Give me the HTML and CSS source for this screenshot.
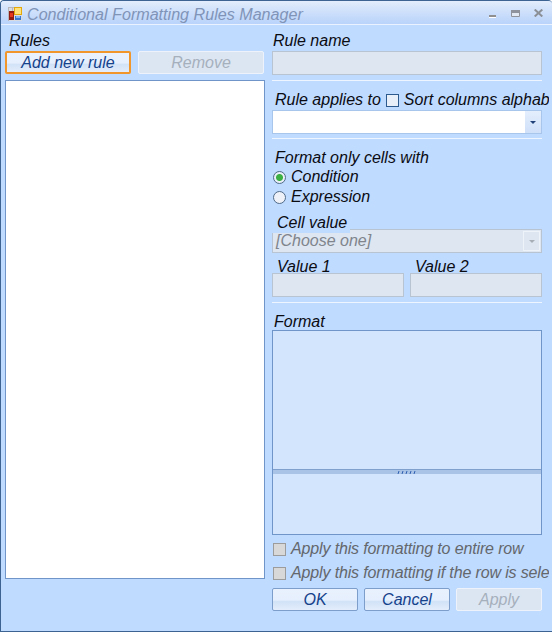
FILE: index.html
```html
<!DOCTYPE html>
<html>
	<head>
		<title>Conditional Formatting Rules Manager</title>
		<link rel="stylesheet" href="styles.css">
	</head>
	<body>
		<div class="window">
			<div class="titlebar">
				<svg class="app-icon" width="14" height="14" viewBox="0 0 14 14">
					<rect x="0" y="0" width="14" height="14" fill="#d9dbe2"/>
					<path d="M0 .5h14M0 4.5h6M.5 0v14M4.5 0v4" stroke="#b9b6ba" fill="none"/>
					<rect x="6" y="0" width="8" height="8" fill="#e3a90c"/>
					<rect x="7" y="1" width="6" height="6" fill="#ffe27a"/>
					<rect x="1" y="4" width="5" height="9" fill="#8f1d14"/>
					<rect x="2" y="6" width="3" height="4" fill="#e6371f"/>
					<rect x="7" y="9" width="6" height="4" fill="#3a78d0"/>
					<rect x="8" y="9" width="4" height="2" fill="#86b6f0"/>
				</svg>
				<span class="title">Conditional Formatting Rules Manager</span>
				<div class="window-buttons">
					<svg class="btn-min" width="7" height="4" viewBox="0 0 7 4"><rect width="7" height="2" y="0" fill="#8f8f8f"/><rect width="7" height="1" y="2" fill="#fff"/></svg>
					<svg class="btn-max" width="9" height="7" viewBox="0 0 9 7"><rect width="9" height="7" fill="#e3e9f2"/><rect width="9" height="3" fill="#8f939b"/><path d="M.5.5h8v6h-8z" fill="none" stroke="#8f939b"/></svg>
					<svg width="9" height="8" viewBox="0 0 9 8"><path d="M.7.5l7.6 7M8.3.5l-7.6 7" stroke="#8b8f96" stroke-width="2" fill="none"/></svg>
				</div>
			</div>
			<div class="content">
				<div class="left">
					<div class="label">Rules</div>
					<div class="rule-buttons">
						<button class="btn btn-focus">Add new rule</button>
						<button class="btn btn-disabled">Remove</button>
					</div>
					<div class="rule-list"></div>
				</div>
				<div class="right">
					<div class="label">Rule name</div>
					<div class="input input-disabled"></div>
					<div class="sep sep-name"></div>

					<div class="applies-row">
						<span class="label">Rule applies to</span>
						<span class="checkbox"></span>
						<span class="label">Sort columns alphabetically</span>
					</div>
					<div class="combo">
						<span class="combo-text"></span>
						<span class="combo-arrow"><i class="arrow"></i></span>
					</div>
					<div class="sep sep-applies"></div>

					<div class="label format-only">Format only cells with</div>
					<div class="radio-row">
						<span class="radio radio-on"></span>
						<span class="label">Condition</span>
					</div>
					<div class="radio-row">
						<span class="radio"></span>
						<span class="label">Expression</span>
					</div>

					<div class="label cell-value">Cell value</div>
					<div class="combo combo-disabled">
						<span class="combo-text">[Choose one]</span>
						<span class="combo-arrow"><i class="arrow"></i></span>
					</div>

					<div class="values">
						<div>
							<div class="label value-label">Value 1</div>
							<div class="input input-disabled"></div>
						</div>
						<div>
							<div class="label value-label">Value 2</div>
							<div class="input input-disabled"></div>
						</div>
					</div>
					<div class="sep sep-values"></div>

					<div class="label format-label">Format</div>
					<div class="format-box">
						<div class="pane pane-top"></div>
						<div class="splitter">
							<svg width="20" height="3" viewBox="0 0 20 3">
								<path d="M1 3l1-3M5 3l1-3M9 3l1-3M13 3l1-3M17 3l1-3" stroke="#2f5fb0" stroke-width="1" fill="none"/>
							</svg>
						</div>
						<div class="pane"></div>
					</div>

					<div class="check-row check-first">
						<span class="checkbox checkbox-disabled"></span>
						<span class="label label-disabled">Apply this formatting to entire row</span>
					</div>
					<div class="check-row check-second">
						<span class="checkbox checkbox-disabled"></span>
						<span class="label label-disabled">Apply this formatting if the row is selected</span>
					</div>

					<div class="dialog-buttons">
						<button class="btn">OK</button>
						<button class="btn">Cancel</button>
						<button class="btn btn-disabled btn-apply">Apply</button>
					</div>
				</div>
			</div>
		</div>
	</body>
</html>
```

FILE: styles.css
```css
html, body {
	margin: 0;
	padding: 0;
}

body {
	width: 552px;
	height: 632px;
	overflow: hidden;
	font-family: "Liberation Sans", Arial, sans-serif;
	font-size: 16px;
	font-style: italic;
}

.window {
	box-sizing: border-box;
	width: 552px;
	height: 632px;
	background: #bfdbff;
	border: 1px solid #3c6391;
	border-right: 0;
	border-radius: 4px 4px 0 0;
	overflow: hidden;
}

.titlebar {
	box-sizing: border-box;
	display: flex;
	align-items: center;
	height: 24px;
	padding: 3px 0 0 7px;
	background: linear-gradient(#e3edfc, #d5e4fb 30%, #b9d3fb);
	border-bottom: 1px solid #eaf2ff;
}

.app-icon {
	flex: none;
	margin-right: 5px;
}

.title {
	color: #8094b8;
	font-size: 16.13px;
	white-space: nowrap;
}

.window-buttons {
	display: flex;
	align-items: flex-start;
	align-self: flex-start;
	gap: 14px;
	margin-left: auto;
	margin-top: 5px;
	padding-right: 9px;
}

.btn-min {
	margin-top: 6px;
	margin-right: 1px;
}

.btn-max {
	margin-top: 1px;
}

.content {
	display: grid;
	grid-template-columns: 260px 277px;
	column-gap: 7px;
	padding: 6px 0 0 4px;
}

.left, .right {
	display: flex;
	flex-direction: column;
	overflow: hidden;
}

.label {
	color: #0b0b12;
	line-height: 18px;
	white-space: nowrap;
}

.left > .label {
	padding-left: 4px;
	margin-top: 1px;
	margin-bottom: 1px;
}

.right > .label:first-child {
	margin-top: 1px;
	margin-bottom: 1px;
	padding-left: 1px;
}

.rule-buttons {
	display: flex;
	gap: 7px;
}

.btn {
	box-sizing: border-box;
	width: 126px;
	height: 23px;
	padding: 0;
	font: inherit;
	color: #15428b;
	background: linear-gradient(#e9f1fe, #e6effd 52%, #d2e2f7 60%, #e3edfb);
	border: 1px solid #7d9dcb;
	border-radius: 2px;
}

.btn-focus {
	border: 2px solid #f0962a;
}

.btn-disabled {
	color: #a6b0bd;
	background: #dce6f2;
	border: 1px solid #eef3fb;
}

.rule-list {
	box-sizing: border-box;
	width: 260px;
	height: 499px;
	margin-top: 6px;
	background: #fff;
	border: 1px solid #7096c9;
}

.input {
	box-sizing: border-box;
	height: 24px;
}

.input-disabled {
	width: 270px;
	background: #dde6f1;
	border: 1px solid #b9c4d2;
}

.sep {
	width: 270px;
	height: 1px;
	background: #eef5ff;
}

.sep-name {
	margin-top: 5px;
}

.applies-row {
	display: flex;
	align-items: center;
	height: 18px;
	margin-top: 10px;
	padding-left: 3px;
	white-space: nowrap;
}

.checkbox {
	flex: none;
	box-sizing: border-box;
	width: 13px;
	height: 13px;
	margin: 0 5px 0 5px;
	background: #e8eff8;
	border: 1px solid #2c5a8e;
}

.combo {
	box-sizing: border-box;
	display: flex;
	align-items: stretch;
	justify-content: space-between;
	width: 270px;
	height: 24px;
	margin-top: 1px;
	background: #fff;
	border: 1px solid #a8c6ec;
}

.combo-text {
	color: #8a8a8a;
	line-height: 22px;
	padding-left: 3px;
}

.combo-arrow {
	display: flex;
	align-items: center;
	justify-content: center;
	width: 16px;
	background: linear-gradient(#e4eefd, #cfe0f9);
}

.arrow {
	width: 0;
	height: 0;
	border-left: 3px solid transparent;
	border-right: 3px solid transparent;
	border-top: 3px solid #1f3f78;
}

.sep-applies {
	margin-top: 4px;
}

.format-only {
	margin-top: 10px;
	padding-left: 3px;
}

.radio-row {
	display: flex;
	align-items: center;
	height: 20px;
	padding-left: 1px;
}

.radio {
	flex: none;
	box-sizing: border-box;
	width: 13px;
	height: 13px;
	margin-right: 5px;
	background: #eef2f8;
	border: 1px solid #4f6a88;
	border-radius: 50%;
}

.radio-on {
	background: radial-gradient(circle, #3cb043 0, #3cb043 3px, #e9f0f8 4px);
}

.cell-value {
	position: relative;
	align-self: flex-start;
	margin-top: 7px;
	margin-bottom: -4px;
	padding: 0 3px 0 5px;
	background: #bfdbff;
	height: 19px;
}

.combo-disabled {
	background: #dde6f1;
	border-color: #b9c4d2;
	margin-top: 0;
}

.combo-disabled .combo-text {
	color: #80848c;
}

.combo-disabled .combo-arrow {
	box-sizing: border-box;
	width: 17px;
	margin: 1px;
	background: #dde6f1;
	border: 1px solid #eef3fa;
}

.combo-disabled .arrow {
	border-top-color: #a8aeb6;
}

.values {
	display: grid;
	grid-template-columns: 132px 132px;
	column-gap: 6px;
	width: 270px;
	margin-top: 5px;
}

.values .input-disabled {
	width: 132px;
}

.value-label {
	padding-left: 5px;
	height: 15px;
	line-height: 18px;
}

.sep-values {
	margin-top: 5px;
}

.format-label {
	margin-top: 10px;
	padding-left: 2px;
	height: 17px;
}

.format-box {
	box-sizing: border-box;
	display: flex;
	flex-direction: column;
	width: 270px;
	height: 205px;
	background: #d2e5fd;
	border: 1px solid #7096c9;
}

.pane {
	flex: 1;
}

.pane-top {
	flex: none;
	height: 138px;
}

.splitter {
	box-sizing: border-box;
	display: flex;
	align-items: center;
	justify-content: center;
	height: 5px;
	background: #a9c3e6;
	border-top: 1px solid #7f9fcc;
}

.check-row {
	display: flex;
	align-items: center;
	height: 18px;
	padding-left: 1px;
}

.check-first {
	margin-top: 5px;
}

.check-second {
	margin-top: 6px;
}

.check-row .checkbox {
	margin: 0 5px 0 0;
}

.checkbox-disabled {
	background: #d8d8d8;
	border-color: #9c9c9c;
}

.label-disabled {
	color: #64676c;
	letter-spacing: -0.14px;
}

.dialog-buttons {
	display: flex;
	gap: 6px;
	margin-top: 6px;
}

.dialog-buttons .btn {
	width: 86px;
}
```
